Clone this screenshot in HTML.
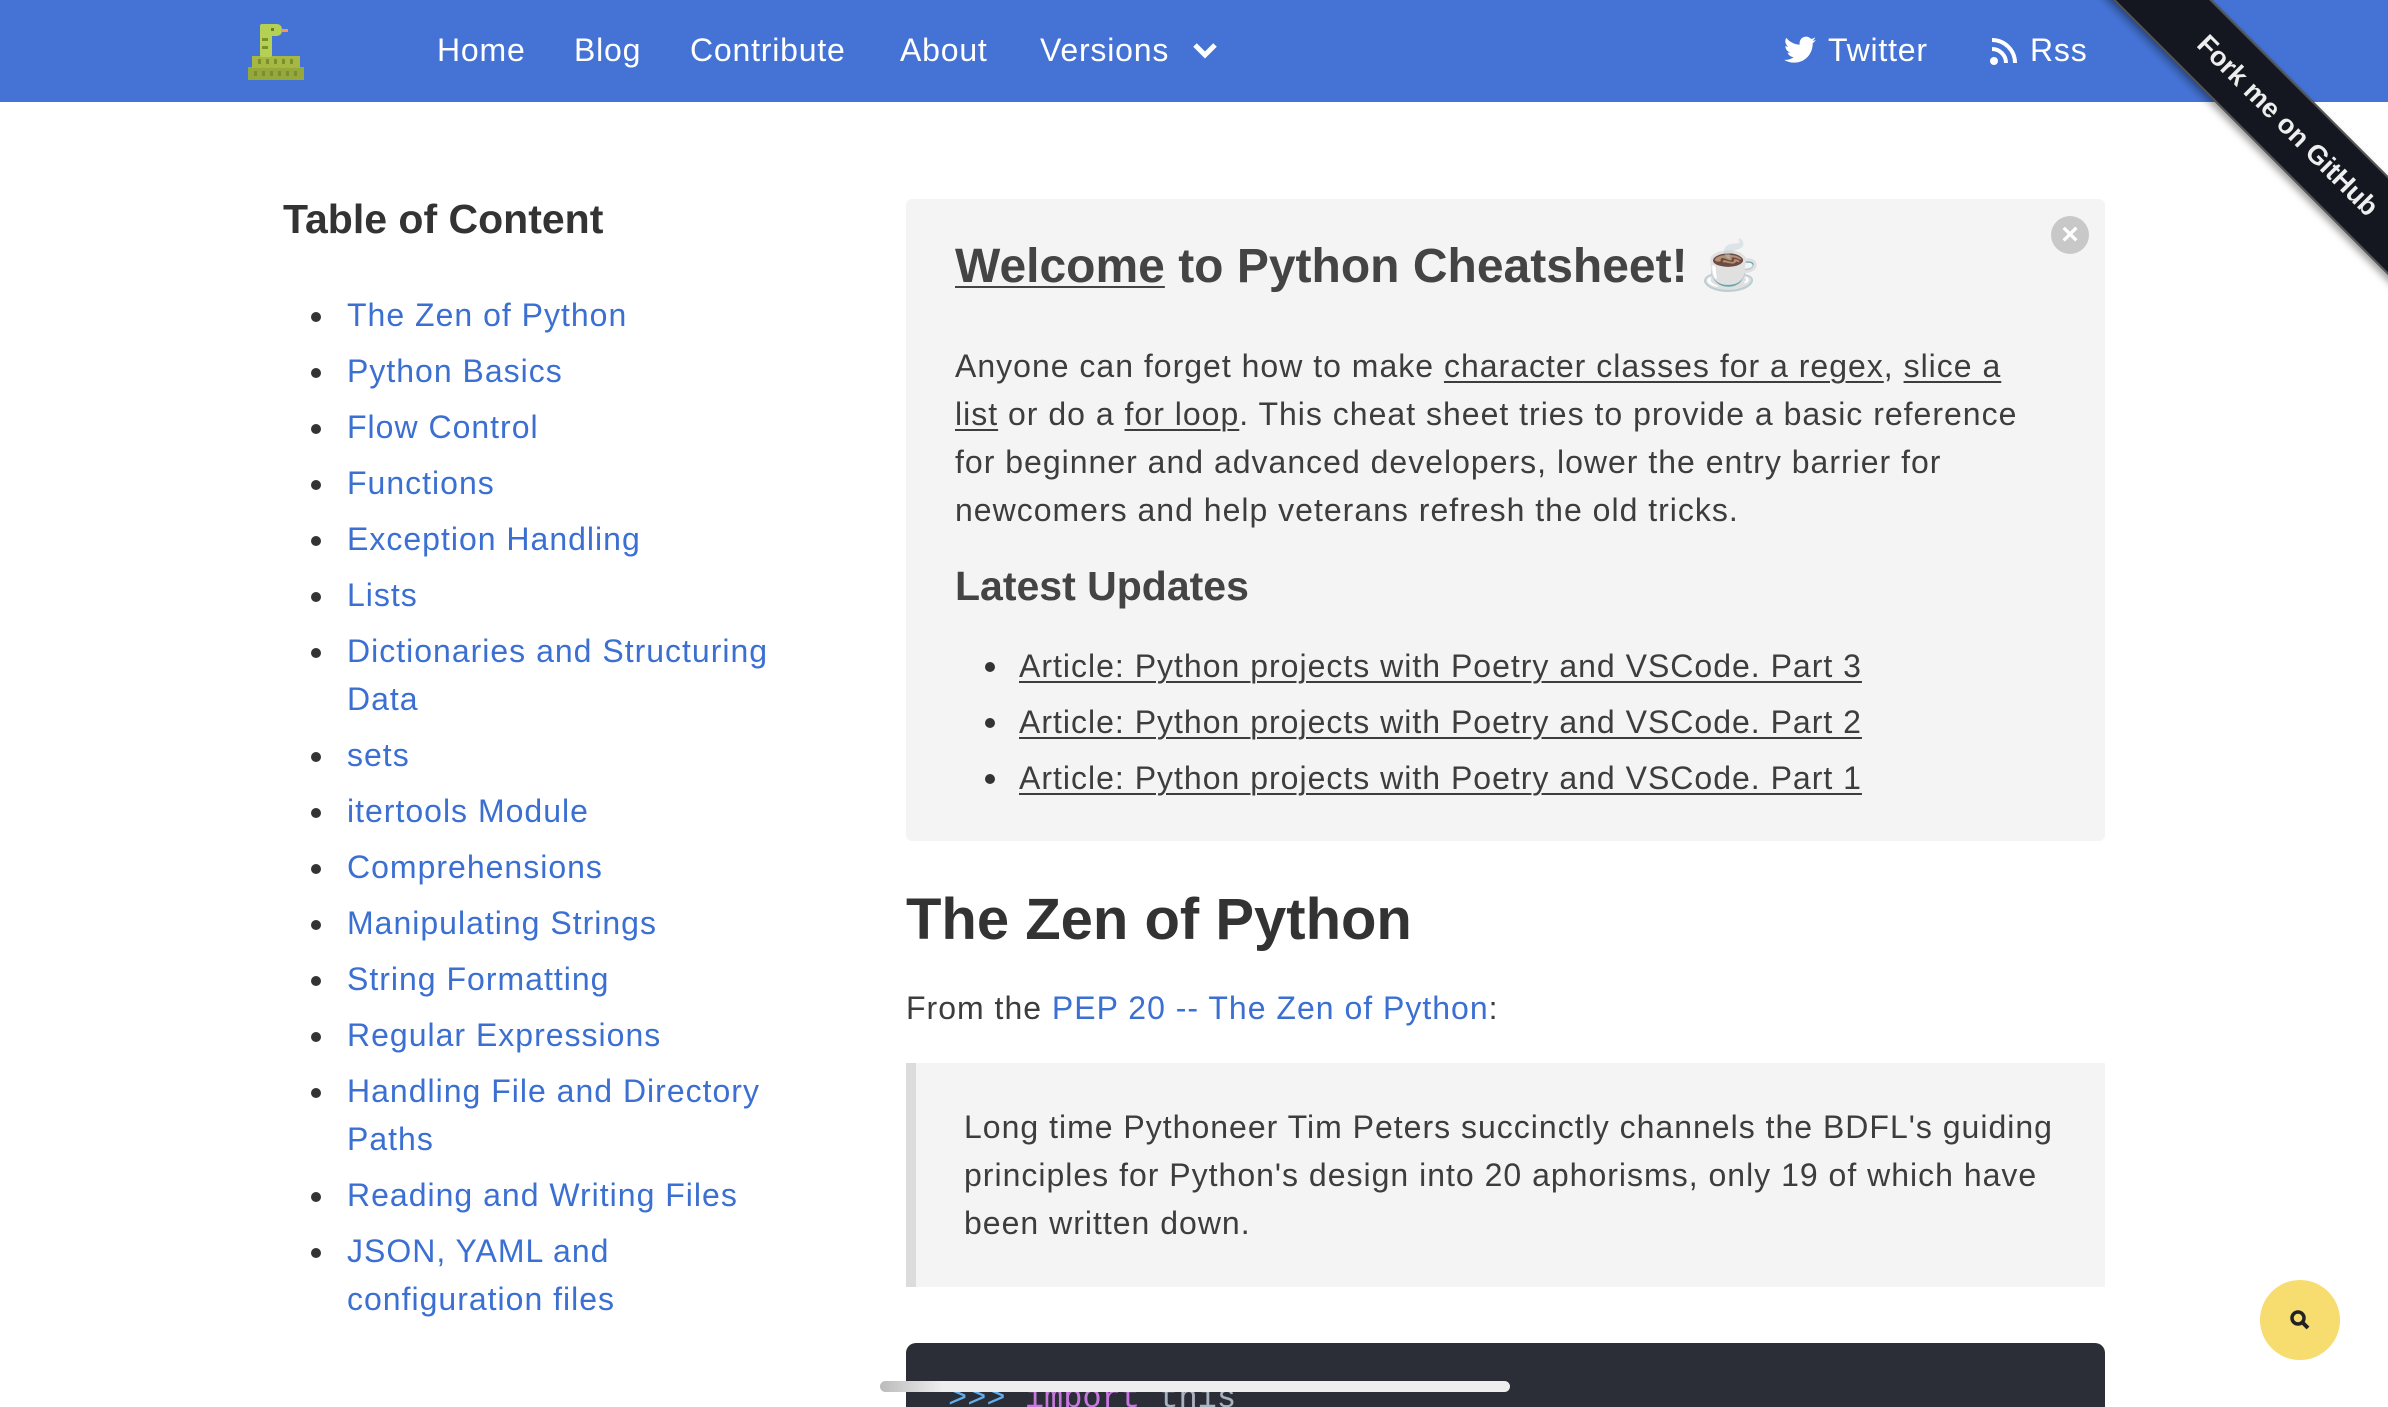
<!DOCTYPE html>
<html><head><meta charset="utf-8"><style>
*{margin:0;padding:0;box-sizing:border-box}
html,body{width:2388px;height:1407px;overflow:hidden;background:#fff;font-family:"Liberation Sans",sans-serif;color:#3d3d3d;position:relative}
.nav{position:absolute;left:0;top:0;width:2388px;height:102px;background:#4473d5}
.nav a{position:absolute;top:30px;color:#fff;font-size:32px;line-height:40px;text-decoration:none;letter-spacing:0.8px}
.ab{position:absolute}
.toc h3{position:absolute;left:283px;top:196px;font-size:41px;font-weight:bold;color:#333}
.toc ul{position:absolute;left:347px;top:291px;width:450px;list-style:none;letter-spacing:1px}
.toc li{font-size:32px;line-height:48px;margin-bottom:8px;color:#3b6fd1;position:relative}
.toc li:before{content:"";position:absolute;left-36px;left:-36px;top:21px;width:10px;height:10px;border-radius:50%;background:#333}
.box{position:absolute;left:906px;top:199px;width:1199px;height:642px;background:#f4f4f4;border-radius:6px}
.p{font-size:32px;line-height:48px;letter-spacing:1px}
u{text-decoration:underline;text-decoration-thickness:2px;text-underline-offset:4px}
.upd{position:absolute;left:1019px;list-style:none;letter-spacing:1px}
.upd li{font-size:32px;line-height:56px;position:relative}
.upd li:before{content:"";position:absolute;left:-34px;top:24px;width:10px;height:10px;border-radius:50%;background:#333}
</style></head><body>
<div class="nav">
<svg class="ab" style="left:248px;top:22px" width="56" height="58" viewBox="0 0 56 58">
<rect x="0" y="45" width="56" height="13" fill="#95a83c"/>
<rect x="4" y="34" width="48" height="12" fill="#a5b842"/>
<rect x="12" y="2" width="12" height="33" rx="2" fill="#b5d153"/>
<rect x="12" y="2" width="22" height="12" rx="5" fill="#b5d153"/>
<rect x="33" y="7" width="7" height="3" fill="#f0994f"/>
<rect x="23" y="6" width="3" height="3" fill="#6a7d2c"/>
<g fill="#7c8f2e"><rect x="14" y="16" width="6" height="3"/><rect x="14" y="24" width="6" height="3"/>
<rect x="10" y="37" width="3" height="5"/><rect x="18" y="37" width="3" height="5"/><rect x="26" y="37" width="3" height="5"/><rect x="34" y="37" width="3" height="5"/><rect x="42" y="37" width="3" height="5"/>
<rect x="6" y="49" width="3" height="5"/><rect x="14" y="49" width="3" height="5"/><rect x="22" y="49" width="3" height="5"/><rect x="30" y="49" width="3" height="5"/><rect x="38" y="49" width="3" height="5"/><rect x="46" y="49" width="3" height="5"/></g>
</svg>
<a style="left:437px">Home</a><a style="left:574px">Blog</a><a style="left:690px">Contribute</a><a style="left:900px">About</a><a style="left:1040px">Versions</a>
<svg class="ab" style="left:1192px;top:42px" width="26" height="18" viewBox="0 0 26 18"><path d="M3 3l10 10 10-10" stroke="#fff" stroke-width="5" fill="none"/></svg>
<svg class="ab" style="left:1784px;top:36px" width="32" height="28" viewBox="0 0 24 20"><path fill="#fff" d="M24 2.4c-.9.4-1.8.7-2.8.8 1-.6 1.8-1.6 2.2-2.7-1 .6-2 1-3.1 1.2C19.3.7 18 0 16.6 0c-2.7 0-4.9 2.2-4.900 4.9 0 .4 0 .8.1 1.1C7.7 5.8 4.1 3.9 1.7.9c-.4.7-.7 1.6-.7 2.5 0 1.7.9 3.2 2.2 4.1-.8 0-1.6-.2-2.2-.6v.1c0 2.4 1.7 4.4 3.9 4.8-.4.1-.8.2-1.3.2-.3 0-.6 0-.9-.1.6 2 2.4 3.4 4.6 3.4-1.700 1.3-3.8 2.1-6.1 2.1-.4 0-.8 0-1.2-.1 2.2 1.4 4.8 2.2 7.5 2.2 9.1 0 14-7.5 14-14v-.6c1-.7 1.8-1.6 2.5-2.5z"/></svg>
<a style="left:1828px">Twitter</a>
<svg class="ab" style="left:1990px;top:37px" width="28" height="28" viewBox="0 0 28 28"><circle cx="4" cy="24" r="4" fill="#fff"/><path d="M2 12a14 14 0 0 1 14 14M2 3a23 23 0 0 1 23 23" stroke="#fff" stroke-width="4" fill="none"/></svg>
<a style="left:2030px">Rss</a>
</div>
<div class="ab" style="left:2080px;top:-62px;width:460px;height:70px;background:#141720;transform-origin:0 0;transform:translate(70px,0) rotate(45deg);box-shadow:0 4px 8px rgba(0,0,0,.4);border-top:2px solid #555;border-bottom:2px solid #555;color:#eee;font-size:27px;font-weight:bold;line-height:66px;text-align:center">Fork me on GitHub</div>
<div class="toc"><h3>Table of Content</h3>
<ul><li>The Zen of Python</li><li>Python Basics</li><li>Flow Control</li><li>Functions</li><li>Exception Handling</li><li>Lists</li><li>Dictionaries and Structuring Data</li><li>sets</li><li>itertools Module</li><li>Comprehensions</li><li>Manipulating Strings</li><li>String Formatting</li><li>Regular Expressions</li><li>Handling File and Directory Paths</li><li>Reading and Writing Files</li><li>JSON, YAML and configuration files</li></ul></div>
<div class="box"></div>
<div class="ab" style="left:2051px;top:216px;width:38px;height:38px;border-radius:50%;background:#c8c8c8;color:#fff;font-size:30px;font-weight:bold;text-align:center;line-height:37px">×</div>
<div class="ab" style="left:955px;top:238px;font-size:48px;font-weight:bold;color:#444;line-height:58px"><u>Welcome</u> to Python Cheatsheet! ☕</div>
<div class="ab p" style="left:955px;top:342px;width:1080px">Anyone can forget how to make <u>character classes for a regex</u>, <u>slice a list</u> or do a <u>for loop</u>. This cheat sheet tries to provide a basic reference for beginner and advanced developers, lower the entry barrier for newcomers and help veterans refresh the old tricks.</div>
<div class="ab" style="left:955px;top:563px;font-size:41px;font-weight:bold;color:#444">Latest Updates</div>
<ul class="upd" style="top:638px"><li><u>Article: Python projects with Poetry and VSCode. Part 3</u></li><li><u>Article: Python projects with Poetry and VSCode. Part 2</u></li><li><u>Article: Python projects with Poetry and VSCode. Part 1</u></li></ul>
<div class="ab" style="left:906px;top:886px;font-size:58px;font-weight:bold;color:#333">The Zen of Python</div>
<div class="ab p" style="left:906px;top:984px">From the <span style="color:#3b6fd1">PEP 20 -- The Zen of Python</span>:</div>
<div class="ab" style="left:906px;top:1063px;width:1199px;height:224px;background:#f4f4f4;border-left:10px solid #dcdcdc"></div>
<div class="ab p" style="left:964px;top:1103px;width:1110px">Long time Pythoneer Tim Peters succinctly channels the BDFL's guiding principles for Python's design into 20 aphorisms, only 19 of which have been written down.</div>
<div class="ab" style="left:906px;top:1343px;width:1199px;height:100px;background:#2b2e36;border-radius:10px"></div>
<div class="ab" style="left:948px;top:1380px;font-family:'Liberation Mono',monospace;font-size:32px;color:#abb2bf"><span style="color:#61afef">&gt;&gt;&gt;</span> <span style="color:#c678dd">import</span> this</div>
<div class="ab" style="left:880px;top:1381px;width:630px;height:11px;border-radius:6px;background:linear-gradient(90deg,#bbb,#eee 10%,#eee)"></div>
<div class="ab" style="left:2260px;top:1280px;width:80px;height:80px;border-radius:50%;background:#f7dc6f"></div>
<svg class="ab" style="left:2289px;top:1309px" width="22" height="22" viewBox="0 0 22 22"><circle cx="9" cy="9" r="6" stroke="#222" stroke-width="3.5" fill="none"/><path d="M13 13l6 6" stroke="#222" stroke-width="4"/></svg>
</body></html>
